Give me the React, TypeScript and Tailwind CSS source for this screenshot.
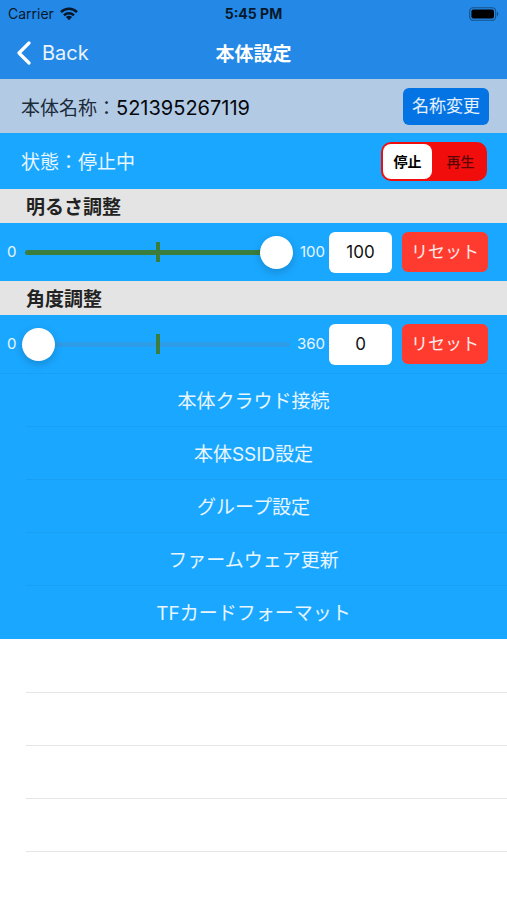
import React, { useState } from 'react';

interface AdjustRowProps {
  id: string;
  label: string;
  max: number;
  initial: number;
}

const menuItems: string[] = [
  '本体クラウド接続',
  '本体SSID設定',
  'グループ設定',
  'ファームウェア更新',
  'TFカードフォーマット',
];

const emptyRows = [0, 1, 2, 3];

const playModes = [
  { id: 'stop', label: '停止' },
  { id: 'play', label: '再生' },
];

const WifiIcon = () => (
  <svg width="18" height="14" viewBox="0 0 18 14" aria-hidden="true">
    <g fill="none" stroke="currentColor" strokeWidth="2.5">
      <path d="M1 5.1C5.5 .7 12.5 .7 17 5.1" />
      <path d="M4 8.3c2.8-2.8 7.2-2.8 10 0" />
    </g>
    <path d="M9 13.2 5.9 10.1c1.7-1.7 4.5-1.7 6.2 0z" fill="currentColor" />
  </svg>
);

const BatteryIcon = () => (
  <svg width="30" height="14" viewBox="0 0 30 14" aria-hidden="true">
    <rect x=".7" y=".7" width="26" height="12.6" rx="3.6" fill="none" stroke="#000" strokeOpacity=".4" strokeWidth="1.1" />
    <rect x="2.4" y="2.4" width="22.6" height="9.2" rx="2" fill="#000" />
    <path d="M28 4.8c1.7.7 1.7 3.7 0 4.4z" fill="#000" fillOpacity=".45" />
  </svg>
);

const SectionTitle: React.FC<{ children: React.ReactNode }> = ({ children }) => (
  <h2 className="flex h-[34px] items-center bg-[#e4e4e4] px-[26px] pt-1 text-[19px] font-semibold text-[#222222]">
    {children}
  </h2>
);

const AdjustRow: React.FC<AdjustRowProps> = ({ id, label, max, initial }) => {
  const [value, setValue] = useState(initial);

  const update = (next: number) => {
    if (!Number.isNaN(next)) setValue(Math.min(max, Math.max(0, next)));
  };

  return (
    <div className="flex h-[58px] items-center pr-[19px] pl-[7px]">
      <span className="w-[15px] text-[15px] text-white/90">0</span>
      <div className="relative flex h-[34px] flex-1 items-center">
        {/* track, filled part and centre mark sit under the thumb */}
        <div className="absolute inset-x-[3px] h-[5px] overflow-hidden rounded-full bg-[#2d9de8]">
          <div className="h-full bg-[#3a7d3c]" style={{ width: `${(value / max) * 100}%` }} />
        </div>
        <div className="absolute left-1/2 h-5 w-1 -translate-x-1/2 bg-[#3a7d3c]" />
        <input
          id={`${id}-slider`}
          type="range"
          min={0}
          max={max}
          value={value}
          aria-label={label}
          onChange={(e) => update(Number(e.target.value))}
          className="relative h-[34px] w-full cursor-pointer appearance-none bg-transparent [&::-webkit-slider-thumb]:h-[33px] [&::-webkit-slider-thumb]:w-[33px] [&::-webkit-slider-thumb]:appearance-none [&::-webkit-slider-thumb]:rounded-full [&::-webkit-slider-thumb]:bg-white [&::-webkit-slider-thumb]:shadow-[0_3px_8px_rgba(0,0,0,0.18)]"
        />
      </div>
      <span className="w-8 text-right text-[15px] text-white/90">{max}</span>
      <input
        id={`${id}-value`}
        type="text"
        inputMode="numeric"
        value={value}
        aria-label={`${label} 数値`}
        onChange={(e) => update(Number(e.target.value))}
        className="ml-1 h-[41px] w-[63px] rounded-md bg-white text-center text-[17px] text-[#111111]"
      />
      <button
        type="button"
        onClick={() => setValue(initial)}
        className="ml-2.5 h-10 w-[86px] rounded-md bg-[#ff3b30] pt-0.5 text-[17px] text-white/90"
      >
        リセット
      </button>
    </div>
  );
};

const App: React.FC = () => {
  const [mode, setMode] = useState('stop');

  return (
    <div
      lang="ja"
      className="min-h-screen w-full bg-white font-['Inter','Noto_Sans_CJK_JP',sans-serif]"
    >
      <header className="bg-[#2488e6]">
        <div className="grid h-[27px] grid-cols-3 items-center px-2 text-[14px] text-[#06182b]">
          <div className="flex items-center gap-1.5">
            <span>Carrier</span>
            <WifiIcon />
          </div>
          <span className="text-center font-bold">5:45 PM</span>
          <div className="flex justify-end">
            <BatteryIcon />
          </div>
        </div>
        <div className="grid h-[52px] grid-cols-3 items-center px-4 text-white">
          <button type="button" className="flex items-center gap-[10px] text-[20px] text-white/90">
            <svg width="16" height="24" viewBox="0 0 16 24" aria-hidden="true">
              <path d="M13 2 3 12l10 10" fill="none" stroke="#fff" strokeWidth="3.2" strokeLinecap="round" strokeLinejoin="round" />
            </svg>
            Back
          </button>
          <h1 className="pt-1 text-center text-[19px] font-semibold">本体設定</h1>
        </div>
      </header>

      <main>
        <div className="flex h-[54px] items-center justify-between bg-[#b3cae5] pr-[18px] pl-[21px]">
          <p className="pt-1 text-[19px] text-[#1c2b3a]">
            本体名称：<span className="text-[20px] text-[#05080c]">521395267119</span>
          </p>
          <button type="button" className="h-[37px] w-[86px] rounded-md bg-[#0474e4] pt-0.5 text-[17px] text-white/90">
            名称変更
          </button>
        </div>

        <div className="bg-[#1aa7ff]">
          <div className="flex h-14 items-center justify-between pr-5 pl-[21px]">
            <p className="pt-1 text-[19px] text-white/90">状態：{mode === 'stop' ? '停止中' : '再生中'}</p>
            <fieldset className="flex h-[39px] w-[106px] justify-between rounded-[10px] bg-[#f20d0d] p-0.5" aria-label="再生状態">
              {playModes.map((m) => (
                <label
                  key={m.id}
                  className={`flex w-[49px] cursor-pointer items-center justify-center rounded-lg text-[14px] ${
                    mode === m.id ? 'bg-white font-bold text-black' : 'font-medium text-[#5c0505]'
                  }`}
                >
                  <input
                    type="radio"
                    name="mode"
                    value={m.id}
                    checked={mode === m.id}
                    onChange={() => setMode(m.id)}
                    className="sr-only"
                  />
                  {m.label}
                </label>
              ))}
            </fieldset>
          </div>

          <SectionTitle>明るさ調整</SectionTitle>
          <AdjustRow id="brightness" label="明るさ調整" max={100} initial={100} />

          <SectionTitle>角度調整</SectionTitle>
          <AdjustRow id="angle" label="角度調整" max={360} initial={0} />

          <ul className="border-t border-[#189ff3]">
            {menuItems.map((item, i) => (
              <li key={item} className="flex h-[53px] flex-col">
                <button type="button" className="flex-1 pt-1 text-[19px] text-white/90">
                  {item}
                </button>
                {i < menuItems.length - 1 && <div className="ml-[26px] h-px bg-[#189ff3]" />}
              </li>
            ))}
          </ul>
        </div>

        <div className="pt-px">
          {emptyRows.map((row) => (
            <div key={row} className="ml-[26px] h-[53px] border-b border-[#e6e6e6]" />
          ))}
        </div>
      </main>
    </div>
  );
};

export default App;
